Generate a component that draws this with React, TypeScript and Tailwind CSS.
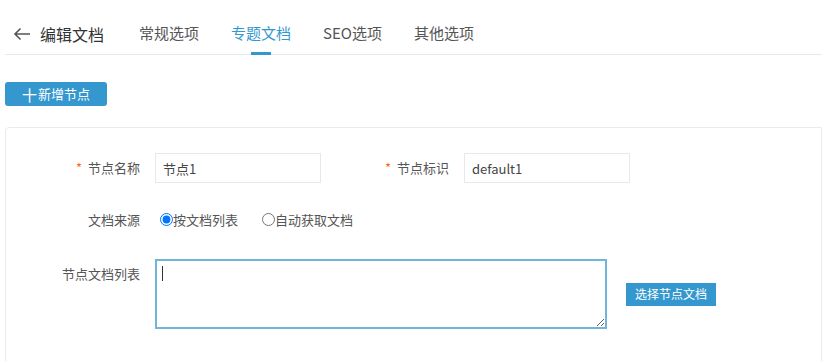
import { type FC, type ReactNode } from "react";

const font = {
  fontFamily: '"Noto Sans CJK SC", "Noto Sans", "Liberation Sans", sans-serif',
};

const tabs = ["常规选项", "专题文档", "SEO选项", "其他选项"];

const Header: FC = () => {
  return (
    <div className="flex h-[55px] items-center border-b border-[#e8e8e8] pl-2 pt-[13px]">
      <svg width="18" height="14" viewBox="0 0 18 14" className="mr-[9px] text-[#555]">
        <path d="M17 7H2M7.5 1.5 2 7l5.5 5.5" fill="none" stroke="currentColor" strokeWidth="1.6" />
      </svg>
      <span className="text-[16px] text-[#333]">编辑文档</span>
      <div className="ml-[19px] flex h-full">
        {tabs.map((t, i) => (
          <div
            key={t}
            className={`relative flex items-center px-4 text-[15px] ${
              i === 1 ? "text-[#3498cf]" : "text-[#555]"
            }`}
          >
            {t}
            {i === 1 && (
              <span className="absolute bottom-[-1px] left-1/2 h-[3px] w-5 -translate-x-1/2 bg-[#3498cf]" />
            )}
          </div>
        ))}
      </div>
    </div>
  );
};

const Label: FC<{ children: ReactNode; required?: boolean; width: string }> = ({
  children,
  required,
  width,
}) => {
  return (
    <div className={`${width} shrink-0 pr-[15px] text-right text-[13px] text-[#555]`}>
      {required && <span className="mr-[6px] text-[#ff6a1a]">*</span>}
      {children}
    </div>
  );
};

const TextInput: FC<{ value: string }> = ({ value }) => {
  return (
    <input
      defaultValue={value}
      className="h-[30px] w-[166px] border border-[#e8e8e8] px-[7px] text-[13px] text-[#444] outline-none"
      style={font}
    />
  );
};

export default function App() {
  return (
    <div className="min-h-[361px] bg-white px-[5px]" style={font}>
      <Header />
      <div className="pt-[27px]">
        <button className="flex h-6 w-[102px] items-center justify-center rounded-[3px] bg-[#3498cf] text-[13px] text-white">
          <span className="mr-[1px] text-[15px] leading-none">十</span>新增节点
        </button>
      </div>
      <div className="mt-[21px] h-[240px] rounded-tl-[4px] border border-[#ebebeb] pt-[25px]">
        <div className="flex items-center">
          <Label width="w-[149px]" required>
            节点名称
          </Label>
          <TextInput value="节点1" />
          <Label width="w-[143px]" required>
            节点标识
          </Label>
          <TextInput value="default1" />
        </div>
        <div className="mt-[27px] flex items-center">
          <Label width="w-[149px]">文档来源</Label>
          <label className="ml-[5px] flex items-center text-[13px] text-[#555]">
            <input type="radio" name="src" defaultChecked className="m-0 h-[13px] w-[13px]" />
            按文档列表
          </label>
          <label className="ml-[24px] flex items-center text-[13px] text-[#555]">
            <input type="radio" name="src" className="m-0 h-[13px] w-[13px]" />
            自动获取文档
          </label>
        </div>
        <div className="mt-[29px] flex items-start">
          <div className="pt-[5px]">
            <Label width="w-[149px]">节点文档列表</Label>
          </div>
          <div className="relative">
            <textarea className="block h-[70px] w-[452px] border-2 border-[#72b5da] outline-none" />
            <span className="absolute left-[7px] top-[7px] h-[15px] w-px bg-[#333]" />
          </div>
          <button className="ml-[19px] mt-6 h-[23px] w-[90px] bg-[#3498cf] text-[12px] text-white">
            选择节点文档
          </button>
        </div>
      </div>
    </div>
  );
}
